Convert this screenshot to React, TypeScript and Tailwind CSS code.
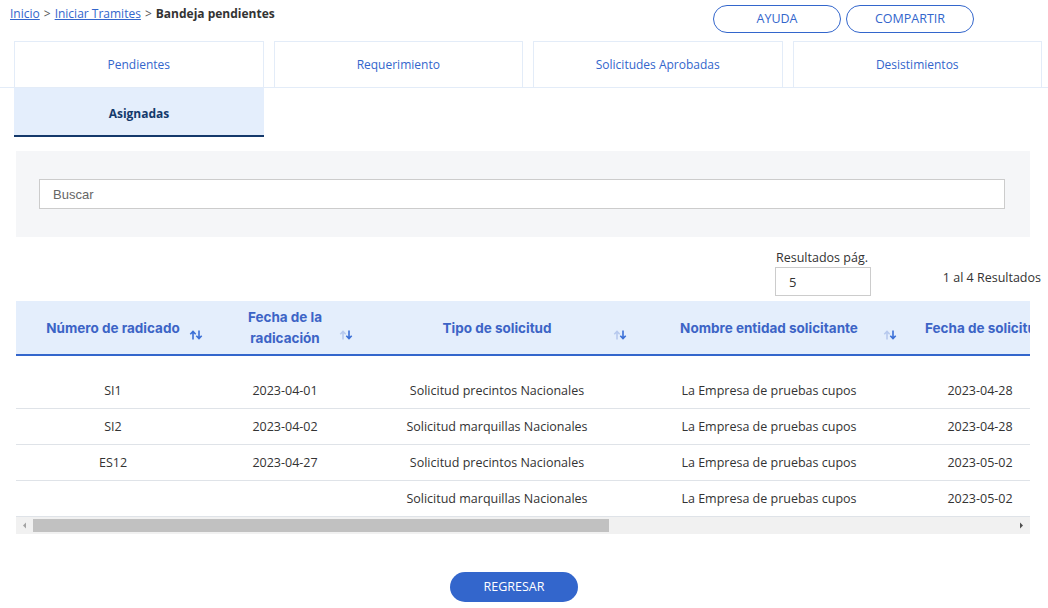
import { useState } from 'react';

type Row = {
    numero: string;
    fecha: string;
    tipo: string;
    entidad: string;
    fechaSolicitud: string;
};

const TABS = ['Pendientes', 'Requerimiento', 'Solicitudes Aprobadas', 'Desistimientos'];

const ROWS: Row[] = [
    { numero: 'SI1', fecha: '2023-04-01', tipo: 'Solicitud precintos Nacionales', entidad: 'La Empresa de pruebas cupos', fechaSolicitud: '2023-04-28' },
    { numero: 'SI2', fecha: '2023-04-02', tipo: 'Solicitud marquillas Nacionales', entidad: 'La Empresa de pruebas cupos', fechaSolicitud: '2023-04-28' },
    { numero: 'ES12', fecha: '2023-04-27', tipo: 'Solicitud precintos Nacionales', entidad: 'La Empresa de pruebas cupos', fechaSolicitud: '2023-05-02' },
    { numero: '', fecha: '', tipo: 'Solicitud marquillas Nacionales', entidad: 'La Empresa de pruebas cupos', fechaSolicitud: '2023-05-02' },
];

const COLS = [
    { label: ['Número de radicado'], width: 'w-[194px]', active: true, key: 'numero' },
    { label: ['Fecha de la', 'radicación'], width: 'w-[150px]', active: false, key: 'fecha' },
    { label: ['Tipo de solicitud'], width: 'w-[274px]', active: false, key: 'tipo' },
    { label: ['Nombre entidad solicitante'], width: 'w-[270px]', active: false, key: 'entidad' },
    { label: ['Fecha de solicitud'], width: 'w-[152px]', active: false, key: 'fechaSolicitud' },
] as const;

function SortIcon({ active }: { active: boolean }) {
    return (
        <svg width="14" height="10" viewBox="0 0 14 10" className="shrink-0">
            <g stroke={active ? '#3b6fd6' : '#b7c9ee'} strokeWidth="1.6" fill="none">
                <path d="M4 9.5V1.5M1.3 4.2L4 1.5L6.7 4.2" />
            </g>
            <g stroke="#3b6fd6" strokeWidth="1.6" fill="none">
                <path d="M10 0.5V8.5M7.3 5.8L10 8.5L12.7 5.8" />
            </g>
        </svg>
    );
}

export default function App() {
    const [search, setSearch] = useState('');
    const [perPage, setPerPage] = useState('5');

    return (
        <div className="w-[1048px] h-[608px] overflow-hidden bg-white text-[#333] font-['Open_Sans','Noto_Sans',sans-serif]">
            {/* breadcrumb + actions */}
            <div className="flex items-start h-[40px]">
                <div className="pl-[10px] pt-[5px] text-[12px] flex items-center gap-[4px]">
                    <a className="text-[#3366cc] underline">Inicio</a>
                    <span className="text-[#555]">&gt;</span>
                    <a className="text-[#3366cc] underline">Iniciar Tramites</a>
                    <span className="text-[#555]">&gt;</span>
                    <span className="font-bold text-[#333]">Bandeja pendientes</span>
                </div>
                <div className="ml-auto mr-[74px] mt-[5px] flex gap-[5px]">
                    <button className="w-[128px] h-[28px] rounded-full border border-[#3366cc] text-[#3366cc] text-[12.5px]">AYUDA</button>
                    <button className="w-[128px] h-[28px] rounded-full border border-[#3366cc] text-[#3366cc] text-[12.5px]">COMPARTIR</button>
                </div>
            </div>

            {/* tabs */}
            <div className="border-b border-[#e3ecf8] mt-[1px]">
                <div className="flex gap-[10px] pl-[14px] pr-[6px]">
                    {TABS.map(tab => (
                        <div key={tab} className="flex-1 h-[46px] border border-b-0 border-[#e3ecf8] flex items-center justify-center text-[12px] text-[#3366cc]">
                            {tab}
                        </div>
                    ))}
                </div>
            </div>
            <div className="pl-[14px]">
                <div className="w-[250px] h-[49px] bg-[#e4eefc] border-b-2 border-[#14396b] flex items-center justify-center pt-[4px] text-[12px] font-bold text-[#14396b]">
                    Asignadas
                </div>
            </div>

            {/* search panel */}
            <div className="mx-[16px] mt-[14px] w-[1014px] h-[86px] bg-[#f5f6f8] pt-[28px] pl-[23px]">
                <input
                    value={search}
                    onChange={e => setSearch(e.target.value)}
                    placeholder="Buscar"
                    className="w-[966px] h-[30px] bg-white border border-[#cccccc] px-[13px] text-[13px] font-['Liberation_Sans',sans-serif] placeholder:text-[#666] outline-none"
                />
            </div>

            {/* page size */}
            <div className="flex items-end h-[59px] pr-[7px]">
                <div className="ml-[775px] flex flex-col">
                    <span className="text-[12.5px] text-[#333] leading-[16px] ml-[1px]">Resultados pág.</span>
                    <input
                        value={perPage}
                        onChange={e => setPerPage(e.target.value)}
                        className="mt-[1px] w-[96px] h-[29px] border border-[#cccccc] px-[13px] text-[13px] outline-none"
                    />
                </div>
                <span className="ml-auto mb-[8px] text-[12.5px] text-[#333]">1 al 4 Resultados</span>
            </div>

            {/* table */}
            <div className="mx-[16px] mt-[5px] w-[1014px] overflow-hidden">
                <div className="w-[1040px]">
                    <div className="flex h-[55px] bg-[#e4eefc] border-b-2 border-[#3366cc]">
                        {COLS.map(col => (
                            <div key={col.key} className={`${col.width} shrink-0 flex items-center pt-[1px] font-['Inter','Noto_Sans',sans-serif] font-bold text-[13.5px] text-[#3c64c6] leading-[21px]`}>
                                <div className="w-[21px] shrink-0" />
                                <div className="flex-1 text-center whitespace-nowrap">
                                    {col.label.map(l => (
                                        <div key={l}>{l}</div>
                                    ))}
                                </div>
                                {col.key !== 'fechaSolicitud' ? (
                                    <div className="pt-[14px] pr-[7px]">
                                        <SortIcon active={col.active} />
                                    </div>
                                ) : (
                                    <div className="w-[21px] shrink-0" />
                                )}
                            </div>
                        ))}
                    </div>
                    <div className="h-[17px]" />
                    {ROWS.map((row, i) => (
                        <div key={i} className="flex h-[36px] border-b border-[#dfe3e8] text-[12.5px] text-[#333]">
                            {COLS.map(col => (
                                <div key={col.key} className={`${col.width} shrink-0 flex items-center justify-center whitespace-nowrap pt-[1px]`}>
                                    {row[col.key]}
                                </div>
                            ))}
                        </div>
                    ))}
                </div>

                {/* horizontal scrollbar */}
                <div className="flex items-center h-[17px] bg-[#f1f1f1]">
                    <svg width="17" height="17" viewBox="0 0 17 17" className="shrink-0">
                        <path d="M7 8.5L10 5.5V11.5Z" fill="#a3a3a3" />
                    </svg>
                    <div className="w-[576px] h-[13px] bg-[#c1c1c1]" />
                    <div className="flex-1" />
                    <svg width="17" height="17" viewBox="0 0 17 17" className="shrink-0">
                        <path d="M10 8.5L7 5.5V11.5Z" fill="#505050" />
                    </svg>
                </div>
            </div>

            {/* back */}
            <div className="flex justify-center mt-[38px] pr-[20px]">
                <button className="w-[128px] h-[30px] rounded-full bg-[#3366cc] text-white text-[12.5px]">REGRESAR</button>
            </div>
        </div>
    );
}
